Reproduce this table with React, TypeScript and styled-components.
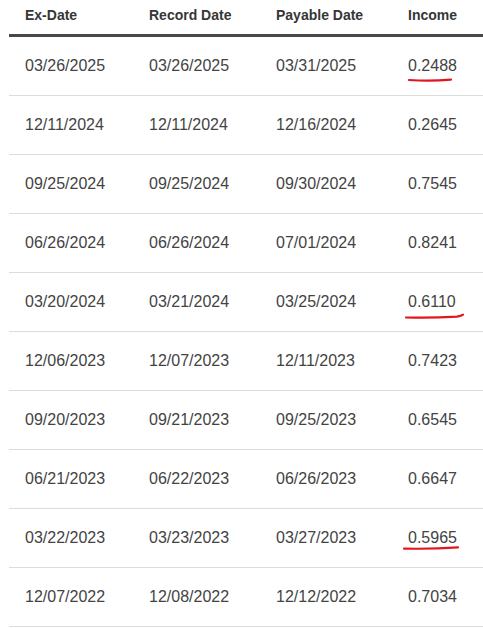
import React from "react";
import styled, { createGlobalStyle } from "styled-components";

const GlobalStyle = createGlobalStyle`
  body {
    margin: 0;
    background: #fff;
    font-family: "Liberation Sans", Arial, sans-serif;
  }
`;

const Wrap = styled.div`
  padding-left: 9px;
`;

const Table = styled.table`
  width: 474px;
  border-collapse: collapse;
  table-layout: fixed;
`;

const Head = styled.th`
  box-sizing: border-box;
  height: 35px;
  padding: 0 0 4px 16px;
  text-align: left;
  vertical-align: middle;
  font-size: 14px;
  font-weight: 700;
  color: #363636;
  border-bottom: 3px solid #484848;
`;

const Cell = styled.td`
  height: 58px;
  padding: 0 0 0 16px;
  font-size: 16px;
  line-height: 18px;
  color: #434343;
  border-bottom: 1px solid #dcdcdc;
  vertical-align: middle;
  white-space: nowrap;
`;

const Marked = styled.span`
  position: relative;
  display: inline-block;
`;

const Scribble = styled.svg`
  position: absolute;
  left: -6px;
  top: calc(100% - 2px);
  width: 64px;
  height: 12px;
  overflow: visible;

  path {
    fill: none;
    stroke: #e3161c;
    stroke-width: 2.2;
    stroke-linecap: round;
  }
`;

type Row = { ex: string; rec: string; pay: string; income: string; mark?: string };

const rows: Row[] = [
  { ex: "03/26/2025", rec: "03/26/2025", pay: "03/31/2025", income: "0.2488", mark: "M7 7 Q28 8.6 49 6.6" },
  { ex: "12/11/2024", rec: "12/11/2024", pay: "12/16/2024", income: "0.2645" },
  { ex: "09/25/2024", rec: "09/25/2024", pay: "09/30/2024", income: "0.7545" },
  { ex: "06/26/2024", rec: "06/26/2024", pay: "07/01/2024", income: "0.8241" },
  { ex: "03/20/2024", rec: "03/21/2024", pay: "03/25/2024", income: "0.6110", mark: "M4 8.5 Q30 9.2 55 7.6 Q59.5 6.8 61 5.6" },
  { ex: "12/06/2023", rec: "12/07/2023", pay: "12/11/2023", income: "0.7423" },
  { ex: "09/20/2023", rec: "09/21/2023", pay: "09/25/2023", income: "0.6545" },
  { ex: "06/21/2023", rec: "06/22/2023", pay: "06/26/2023", income: "0.6647" },
  { ex: "03/22/2023", rec: "03/23/2023", pay: "03/27/2023", income: "0.5965", mark: "M2 3.6 Q30 4.2 56 2.4" },
  { ex: "12/07/2022", rec: "12/08/2022", pay: "12/12/2022", income: "0.7034" },
];

export default function App() {
  return (
    <Wrap>
      <GlobalStyle />
      <Table>
        <colgroup>
          <col style={{ width: 124 }} />
          <col style={{ width: 127 }} />
          <col style={{ width: 132 }} />
          <col />
        </colgroup>
        <thead>
          <tr>
            <Head>Ex-Date</Head>
            <Head>Record Date</Head>
            <Head>Payable Date</Head>
            <Head>Income</Head>
          </tr>
        </thead>
        <tbody>
          {rows.map((r) => (
            <tr key={r.ex}>
              <Cell>{r.ex}</Cell>
              <Cell>{r.rec}</Cell>
              <Cell>{r.pay}</Cell>
              <Cell>
                {r.mark ? (
                  <Marked>
                    {r.income}
                    <Scribble viewBox="0 0 64 12">
                      <path d={r.mark} />
                    </Scribble>
                  </Marked>
                ) : (
                  r.income
                )}
              </Cell>
            </tr>
          ))}
        </tbody>
      </Table>
    </Wrap>
  );
}
